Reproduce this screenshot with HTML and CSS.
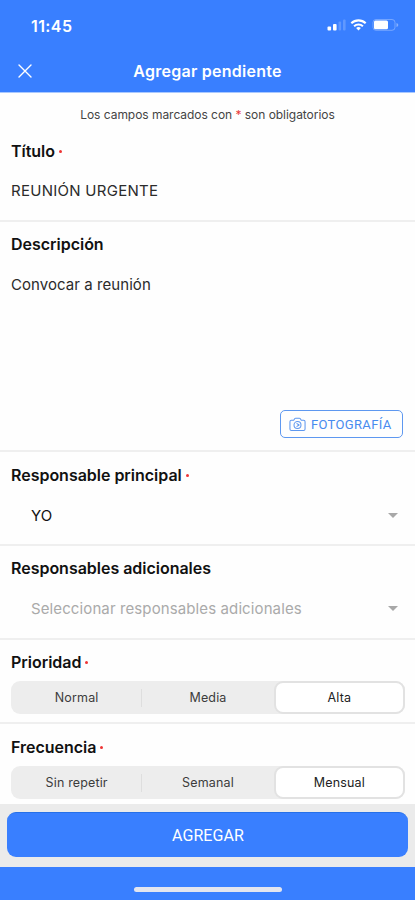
FILE: index.html
```html
<!DOCTYPE html>
<html lang="es">
<head>
<meta charset="utf-8">
<title>Agregar pendiente</title>
<link rel="stylesheet" href="styles.css">
</head>
<body>
<header class="header">
  <div class="status">
    <span class="time">11:45</span>
    <svg class="indicators" width="72" height="16" viewBox="0 0 72 16" fill="#fff">
      <rect x="0.500" y="9.500" width="3.600" height="4" rx="1"/>
      <rect x="6" y="7" width="3.600" height="6.500" rx="1"/>
      <rect x="11.500" y="4.500" width="2.600" height="9" rx="1" opacity=".2"/>
      <rect x="16" y="2.500" width="2.600" height="11" rx="1" opacity=".2"/>
      <g fill="none" stroke="#fff" stroke-width="2.100">
        <path d="M24.300 6.200a10.500 10.500 0 0 1 14.400 0"/>
        <path d="M27.100 9.200a6.500 6.500 0 0 1 8.800 0"/>
      </g>
      <path d="M29.100 10.900q2.400-1.700 4.800 0L31.500 13.600z"/>
      <rect x="46" y="2.500" width="22" height="10.800" rx="3" fill="none" stroke="#fff" opacity=".3"/>
      <rect x="47" y="3.500" width="14" height="8.800" rx="1.500"/>
      <path d="M69.500 6v4q1.800-.5 1.800-2t-1.800-2z" opacity=".4"/>
    </svg>
  </div>
  <div class="navbar">
    <svg class="close" width="14" height="14" viewBox="0 0 14 14" fill="none" stroke="#fff" stroke-width="1.400" stroke-linecap="round"><path d="M1 1l12 12M13 1L1 13"/></svg>
    <h1 class="title">Agregar pendiente</h1>
  </div>
</header>
<main class="form">
  <section class="field field-title">
    <p class="hint">Los campos marcados con <span class="star">*</span> son obligatorios</p>
    <h2 class="label">Título<i class="dot"></i></h2>
    <p class="value upper">REUNIÓN URGENTE</p>
  </section>
  <section class="field field-description">
    <h2 class="label">Descripción</h2>
    <p class="value">Convocar a reunión</p>
    <button class="photo">
      <svg width="17" height="15" viewBox="0 0 18 15" fill="none" stroke="#5e98f0" stroke-width="1.100" stroke-linejoin="round"><path d="M2.500 3H5l1.200-1.800q.3-.4.800-.4h4q.5 0 .8.400L13 3h2.500Q17 3 17 4.500v7.800q0 1.500-1.500 1.500h-13Q1 13.800 1 12.300V4.500Q1 3 2.500 3z"/><circle cx="9" cy="8" r="3.700"/><path d="M8 6.300L10.700 8 8 9.700"/></svg>
      <span>FOTOGRAFÍA</span>
    </button>
  </section>
  <section class="field field-select">
    <h2 class="label">Responsable principal<i class="dot"></i></h2>
    <div class="select"><span>YO</span><i class="caret"></i></div>
  </section>
  <section class="field field-select second">
    <h2 class="label">Responsables adicionales</h2>
    <div class="select placeholder"><span>Seleccionar responsables adicionales</span><i class="caret"></i></div>
  </section>
  <section class="field field-segment">
    <h2 class="label">Prioridad<i class="dot"></i></h2>
    <div class="segments"><span>Normal</span><span>Media</span><span class="active">Alta</span></div>
  </section>
  <section class="field field-segment last">
    <h2 class="label">Frecuencia<i class="dot"></i></h2>
    <div class="segments"><span>Sin repetir</span><span>Semanal</span><span class="active">Mensual</span></div>
  </section>
</main>
<footer class="footer"><button class="submit">AGREGAR</button></footer>
<div class="home"><i class="bar"></i></div>
</body>
</html>
```
FILE: styles.css
```css
* { box-sizing: border-box; }
body, h1, h2, p { margin: 0; }
body {
  width: 415px;
  height: 900px;
  overflow: hidden;
  display: flex;
  flex-direction: column;
  background: #fefefe;
  color: #111;
  font-family: Inter, "Liberation Sans", sans-serif;
}
.header { height: 93px; flex: none; background: #397fff; color: #fff; border-bottom: 1px solid #a9c8ff; }
.status { display: flex; justify-content: space-between; align-items: center; height: 51px; padding: 0 16px 0 31px; }
.time { font-size: 16px; font-weight: 600; letter-spacing: .4px; }
.indicators { margin-top: -1px; }
.navbar { display: grid; grid-template-columns: 36px 1fr 36px; align-items: center; height: 40px; }
.close { margin-left: 18px; }
.title { font-size: 16px; line-height: 20px; font-weight: 600; letter-spacing: .25px; text-align: center; white-space: nowrap; }
.form { height: 711px; flex: none; overflow: hidden; }
.field { border-bottom: 2px solid #efefef; padding: 0 11px; }
.label { display: flex; align-items: center; gap: 4px; height: 20px; font-size: 16px; line-height: 20px; font-weight: 600; letter-spacing: -.02px; white-space: nowrap; }
.dot { width: 3px; height: 3px; border-radius: 50%; background: #ee3434; }
.star { color: #e93939; }
.hint { height: 20px; font-size: 12px; line-height: 20px; letter-spacing: -.04px; text-align: center; color: #444; white-space: nowrap; }
.value { margin-top: 21px; height: 20px; font-size: 15px; line-height: 20px; letter-spacing: .06px; color: #2b2b2b; }
.upper { margin-top: 20px; letter-spacing: .27px; }
.field-title { height: 129px; padding-top: 12px; }
.field-title .label { margin-top: 16px; }
.field-description { height: 230px; padding-top: 12px; display: flex; flex-direction: column; }
.photo { display: flex; align-items: center; gap: 5px; width: 123px; height: 28px; margin: auto 1px 12px auto; padding: 0 0 0 8px; border: 1px solid #5e98f0; border-radius: 5px; background: transparent; color: #478bef; font: 400 13px Roboto, sans-serif; letter-spacing: .33px; }
.field-select { height: 94px; padding-top: 13px; }
.second { padding-top: 12px; }
.select { display: flex; align-items: center; justify-content: space-between; height: 20px; margin-top: 20px; padding: 0 6px 0 20px; font-size: 15px; letter-spacing: .11px; }
.placeholder { color: #aaa; }
.caret { border: 5px solid transparent; border-top: 5px solid #a8a8a8; border-bottom: 0; }
.field-segment { height: 84px; padding-top: 12px; }
.last { height: 85px; padding-top: 13px; }
.segments { display: grid; grid-template-columns: repeat(3, 1fr); height: 33px; margin: 9px -1px 0 0; border-radius: 9px; background: #ededed; font-size: 12.5px; letter-spacing: .15px; color: #3c3c3c; }
.segments span { display: flex; align-items: center; justify-content: center; position: relative; }
.segments span:first-child::after { content: ""; position: absolute; right: 0; top: 8px; width: 1px; height: 18px; background: #dedede; }
.segments .active { border: 2px solid #e2e2e2; border-radius: 9px; background: #fff; color: #222; }
.footer { height: 63px; flex: none; padding: 8px 7px; background: #ebebeb; }
.submit { display: block; width: 401px; height: 45px; padding: 0 0 0 1px; border: 0; border-top: 1px solid #2670e8; border-radius: 9px; background: #397fff; color: #fff; font: 400 16px Roboto, sans-serif; letter-spacing: .1px; }
.home { height: 33px; flex: none; display: flex; justify-content: center; background: #397fff; }
.bar { width: 148px; height: 5px; margin-top: 20px; border-radius: 3px; background: #e3e5ef; }
```
